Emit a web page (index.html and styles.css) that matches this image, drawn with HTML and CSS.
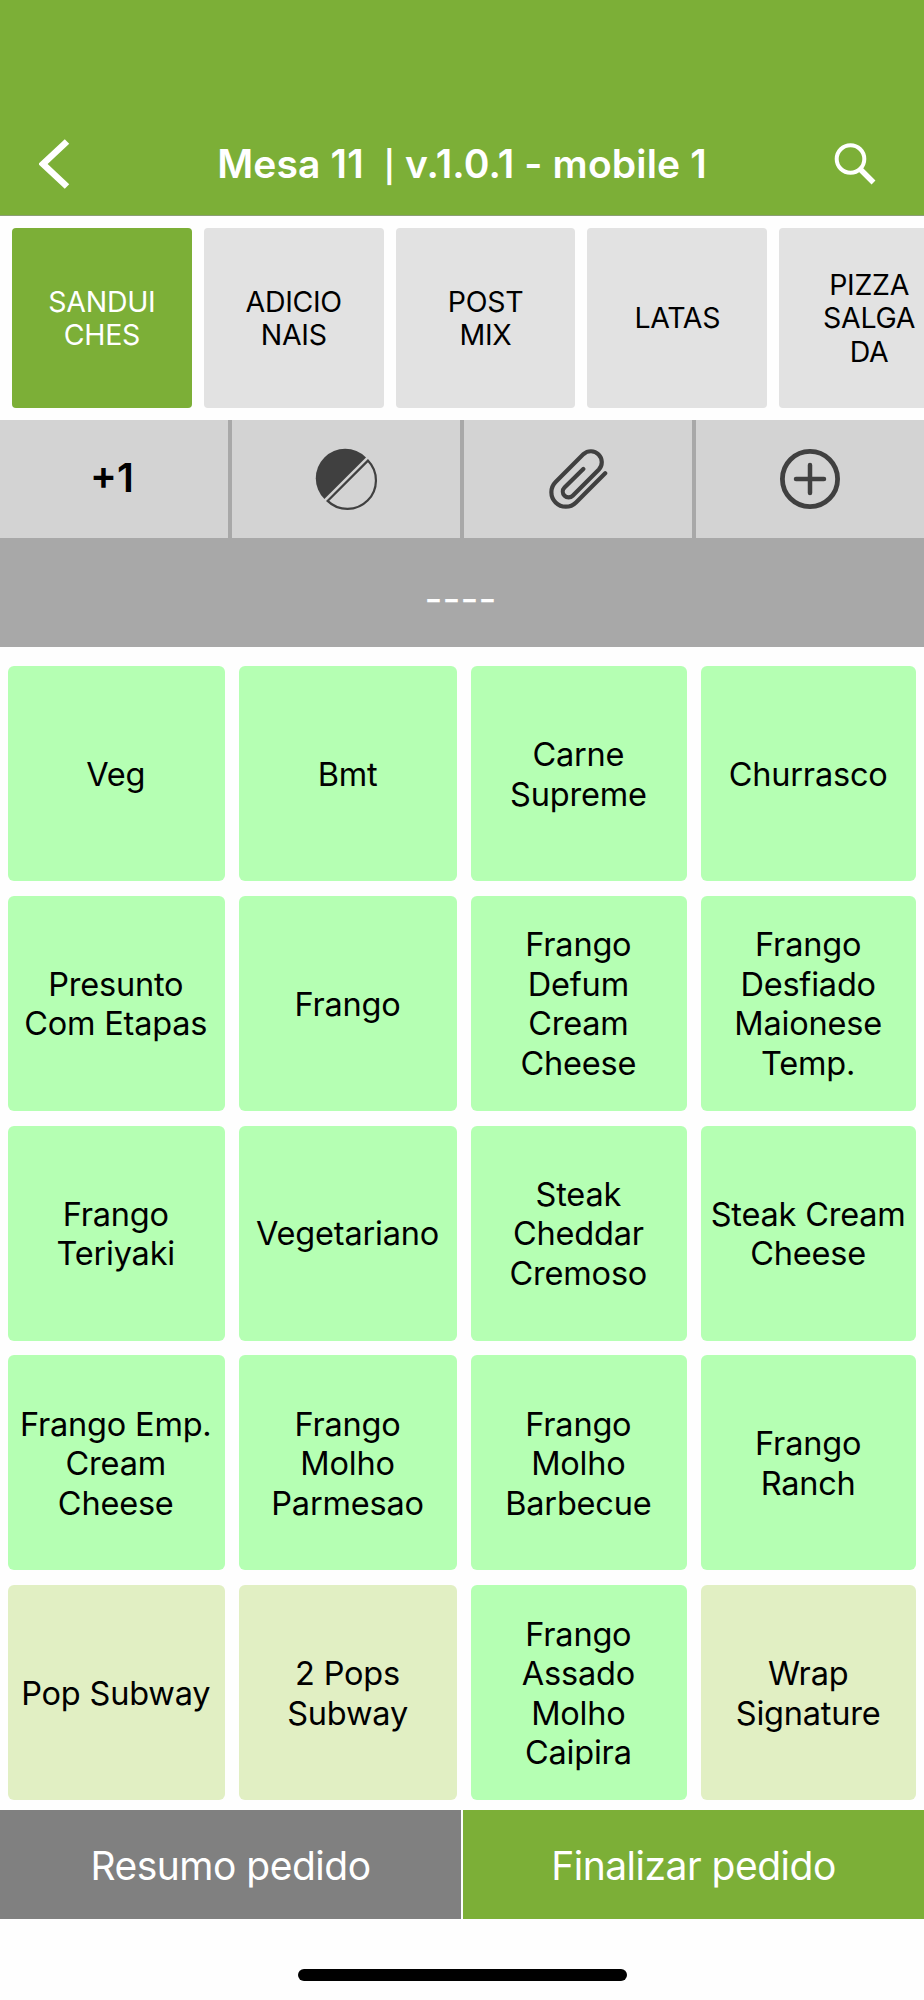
FILE: index.html
```html
<!DOCTYPE html>
<html lang="pt-BR">
<head>
    <meta charset="UTF-8">
    <meta name="viewport" content="width=device-width, initial-scale=1.0">
    <title>Mesa 11</title>
    <link rel="stylesheet" href="styles.css">
</head>
<body>
    <header class="header">
        <button class="header-btn" aria-label="Voltar">
            <svg width="32" height="50" viewBox="0 0 32 50" fill="none" stroke="#fff" stroke-width="6.5">
                <path d="M28 2.5L4 25L28 47.500"/>
            </svg>
        </button>
        <h1 class="title">Mesa 11&nbsp; <span class="divider">|</span> v.1.0.1 - mobile 1</h1>
        <button class="header-btn" aria-label="Buscar">
            <svg width="44" height="44" viewBox="0 0 44 44" fill="none" stroke="#fff">
                <circle cx="17.5" cy="17" r="13.8" stroke-width="4"/>
                <path d="M27.5 27.5L40.5 40.5" stroke-width="5.5"/>
            </svg>
        </button>
    </header>

    <nav class="tabs">
        <button class="tab active">SANDUI<br>CHES</button>
        <button class="tab">ADICIO<br>NAIS</button>
        <button class="tab">POST<br>MIX</button>
        <button class="tab">LATAS</button>
        <button class="tab">PIZZA<br>SALGA<br>DA</button>
    </nav>

    <div class="toolbar">
        <button class="tool plus-one">+1</button>
        <button class="tool" aria-label="Meio a meio">
            <svg width="64" height="64" viewBox="0 0 64 64">
                <path d="M52 10.4A29.4 29.4 0 0 0 10.4 52Z" fill="#404040"/>
                <path d="M53.9 13.6A28.500 28.500 0 0 1 13.6 53.9Z" fill="none" stroke="#404040" stroke-width="2.2"/>
            </svg>
        </button>
        <button class="tool" aria-label="Anexo">
            <svg width="60" height="62" viewBox="0 0 60 62" fill="none" stroke="#404040" stroke-width="4.2" stroke-linecap="round">
                <path d="M35.3 21L16.5 39.6A5.75 5.75 0 0 0 24.7 47.7L50.9 21.5A10.9 10.9 0 0 0 35.5 6.1L7.6 34A14.4 14.4 0 0 0 28 54.4L57.2 25.2"/>
            </svg>
        </button>
        <button class="tool" aria-label="Adicionar">
            <svg width="62" height="62" viewBox="0 0 62 62" fill="none" stroke="#404040">
                <circle cx="31" cy="31" r="27.6" stroke-width="4.8"/>
                <path d="M31 17V45M17 31H45" stroke-width="4.5" stroke-linecap="round"/>
            </svg>
        </button>
    </div>
    <div class="status">----</div>

    <main class="products">
        <button class="product">Veg</button>
        <button class="product">Bmt</button>
        <button class="product">Carne<br>Supreme</button>
        <button class="product">Churrasco</button>
        <button class="product">Presunto<br>Com Etapas</button>
        <button class="product">Frango</button>
        <button class="product">Frango<br>Defum<br>Cream<br>Cheese</button>
        <button class="product">Frango<br>Desfiado<br>Maionese<br>Temp.</button>
        <button class="product">Frango<br>Teriyaki</button>
        <button class="product">Vegetariano</button>
        <button class="product">Steak<br>Cheddar<br>Cremoso</button>
        <button class="product">Steak Cream<br>Cheese</button>
        <button class="product">Frango Emp.<br>Cream<br>Cheese</button>
        <button class="product">Frango<br>Molho<br>Parmesao</button>
        <button class="product">Frango<br>Molho<br>Barbecue</button>
        <button class="product">Frango<br>Ranch</button>
        <button class="product alt">Pop Subway</button>
        <button class="product alt">2 Pops<br>Subway</button>
        <button class="product">Frango<br>Assado<br>Molho<br>Caipira</button>
        <button class="product alt">Wrap<br>Signature</button>
    </main>

    <footer class="footer">
        <button class="summary">Resumo pedido</button>
        <button class="finish">Finalizar pedido</button>
    </footer>
    <div class="home-indicator"></div>
</body>
</html>
```

FILE: styles.css
```css
* {
    box-sizing: border-box;
}
body {
    margin: 0;
    width: 924px;
    height: 2000px;
    overflow: hidden;
    background: #fefefe;
    font-family: Inter, "Liberation Sans", sans-serif;
    color: #000;
}
button {
    border: none;
    padding: 0;
    margin: 0;
    background: none;
    font: inherit;
    color: inherit;
}
svg {
    display: block;
}
.header {
    height: 216px;
    padding: 112px 47px 0 39px;
    display: flex;
    align-items: center;
    background: #7caf37;
    border-bottom: 1px solid #8c9f75;
}
.title {
    flex: 1;
    margin: 0;
    padding-left: 20px;
    text-align: center;
    white-space: nowrap;
    font-size: 39px;
    font-weight: 600;
    letter-spacing: 0.15px;
    color: #fff;
}
.divider {
    font-size: 31px;
}
.tabs {
    height: 204px;
    padding: 12px;
    display: flex;
    gap: 12px;
    overflow: hidden;
}
.tab {
    flex: 0 0 179.8px;
    height: 180px;
    border-radius: 4px;
    background: #e2e2e2;
    font-size: 28.5px;
    line-height: 33.5px;
    letter-spacing: -0.3px;
}
.tab.active {
    background: #7caf37;
    color: #fff;
}
.toolbar {
    height: 118px;
    display: grid;
    grid-template-columns: repeat(4, 1fr);
    gap: 4px;
    background: #a8a8a8;
}
.tool {
    display: flex;
    align-items: center;
    justify-content: center;
    background: #d3d3d3;
}
.plus-one {
    padding: 0 4px 3px 0;
    font-size: 40px;
    font-weight: 600;
}
.status {
    height: 109px;
    padding: 12px 3px 0 0;
    display: flex;
    align-items: center;
    justify-content: center;
    background: #a8a8a8;
    color: #fff;
    font-size: 39px;
}
.products {
    height: 1163px;
    padding: 19px 7px 0 7.5px;
    display: grid;
    grid-template-columns: 217.5px 217.5px 215.5px 215.5px;
    grid-auto-rows: 215px;
    gap: 14.8px 14.3px;
}
.product {
    padding: 2px 1px 0 0;
    border-radius: 6px;
    background: #b5ffb3;
    font-size: 32.5px;
    line-height: 39.4px;
    letter-spacing: -0.2px;
    white-space: nowrap;
}
.product.alt {
    background: #e1efc3;
}
.footer {
    height: 109px;
    display: grid;
    grid-template-columns: 1fr 1fr;
    gap: 2px;
    font-size: 39px;
    letter-spacing: -0.5px;
    color: #fff;
}
.footer button {
    padding-top: 2px;
    letter-spacing: inherit;
}
.summary {
    background: #808080;
}
.finish {
    background: #7caf37;
}
.home-indicator {
    width: 329px;
    height: 12px;
    margin: 50px auto 0;
    border-radius: 6px;
    background: #000;
}
```
